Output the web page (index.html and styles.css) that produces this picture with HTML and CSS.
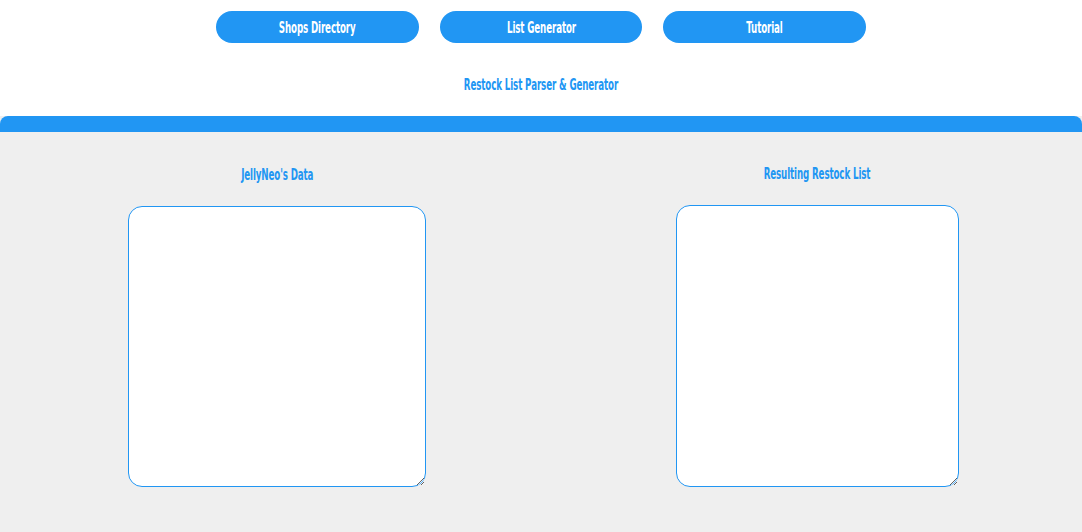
FILE: index.html
```html
<!DOCTYPE html>
<html>
<head>
<meta charset="utf-8">
<link rel="stylesheet" href="styles.css">
</head>
<body>
<nav class="nav">
  <a class="nav-btn" href="#"><span class="txt">Shops Directory</span></a>
  <a class="nav-btn nav-btn-mid" href="#"><span class="txt">List Generator</span></a>
  <a class="nav-btn" href="#"><span class="txt">Tutorial</span></a>
</nav>
<h1 class="title"><span class="txt">Restock List Parser &amp; Generator</span></h1>
<main class="panel">
  <div class="bar"></div>
  <div class="cols">
    <section class="col col-left">
      <h2 class="label"><span class="txt">JellyNeo's Data</span></h2>
      <textarea class="box box-left"></textarea>
    </section>
    <section class="col col-right">
      <h2 class="label"><span class="txt">Resulting Restock List</span></h2>
      <textarea class="box box-right"></textarea>
    </section>
  </div>
</main>
</body>
</html>
```
FILE: styles.css
```css
html, body {
  margin: 0;
  padding: 0;
  background: #ffffff;
  height: 100%;
  overflow: hidden;
}
body {
  font-family: "DejaVu Sans", sans-serif;
  font-weight: bold;
  display: flex;
  flex-direction: column;
}
.txt {
  display: inline-block;
  white-space: nowrap;
  transform: translateY(1px) scaleX(0.58);
  letter-spacing: -0.2px;
}
.nav {
  display: flex;
  justify-content: center;
  gap: 21px;
  padding-top: 11px;
}
.nav-btn {
  width: 203px;
  height: 32px;
  border-radius: 16px;
  background: #2196f3;
  color: #ffffff;
  text-decoration: none;
  font-size: 15px;
  display: flex;
  align-items: center;
  justify-content: center;
}
.nav-btn-mid { width: 202px; }
.title {
  margin: 0;
  padding-top: 33px;
  height: 40px;
  box-sizing: content-box;
  font-size: 15px;
  line-height: 16px;
  color: #2196f3;
  text-align: center;
  font-weight: bold;
}
.panel {
  flex: 1;
  background: #efefef;
  display: flex;
  flex-direction: column;
}
.bar {
  height: 16px;
  background: #2196f3;
  border-radius: 8px 8px 0 0;
}
.cols {
  display: grid;
  grid-template-columns: 541px 541px;
}
.col {
  display: flex;
  flex-direction: column;
  align-items: center;
}
.col-left { padding-left: 13px; }
.col-right { padding-left: 12px; }
.label {
  margin: 0;
  font-size: 15px;
  line-height: 16px;
  color: #2196f3;
  font-weight: bold;
}
.col-left .label { padding-top: 34px; }
.col-right .label { padding-top: 33px; }
.box {
  box-sizing: border-box;
  border: 1px solid #2196f3;
  border-radius: 14px;
  background: #ffffff;
  outline: none;
  margin: 0;
  padding: 2px;
}
.box-left {
  width: 298px;
  height: 281px;
  margin-top: 24px;
}
.box-right {
  width: 283px;
  height: 282px;
  margin-top: 24px;
}
```
